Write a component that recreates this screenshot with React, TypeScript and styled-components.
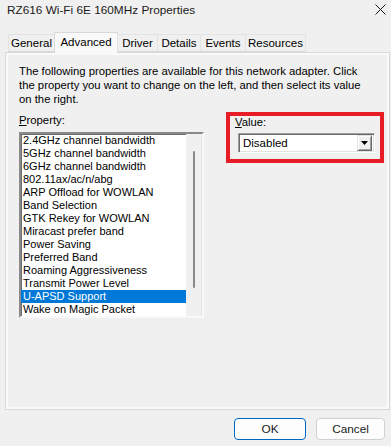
import React from "react";
import styled, { createGlobalStyle } from "styled-components";

const Global = createGlobalStyle`
  html, body { margin: 0; padding: 0; background: #f0f0f0; }
  body { font-family: "Liberation Sans", Arial, sans-serif; color: #000; }
  * { box-sizing: border-box; }
`;

const Window = styled.div`
  width: 391px;
  height: 446px;
  display: flex;
  flex-direction: column;
  background: #f0f0f0;
  overflow: hidden;
`;

const TitleBar = styled.div`
  height: 19px;
  display: flex;
  align-items: center;
  justify-content: space-between;
  padding: 0 5px 0 7px;
  font-size: 11.8px;
  color: #1a1a1a;
`;

const CloseIcon = styled.svg`
  width: 11px;
  height: 11px;
  display: block;
`;

const TabRow = styled.div`
  display: flex;
  align-items: flex-end;
  margin-top: 13px;
  padding-left: 8px;
  height: 20px;
  position: relative;
  z-index: 2;
`;

const Tab = styled.div<{ $w: number; $active?: boolean }>`
  width: ${(p) => p.$w}px;
  height: ${(p) => (p.$active ? 21 : 18)}px;
  margin-bottom: ${(p) => (p.$active ? -1 : 0)}px;
  display: flex;
  align-items: center;
  justify-content: center;
  padding-bottom: ${(p) => (p.$active ? 2 : 0)}px;
  font-size: 11.5px;
  background: ${(p) => (p.$active ? "#f9f9f9" : "#f0f0f0")};
  border: 1px solid ${(p) => (p.$active ? "#d9d9d9" : "#e3e3e3")};
  border-bottom: ${(p) => (p.$active ? "none" : "1px solid #d9d9d9")};
  margin-right: -1px;
`;

const Panel = styled.div`
  margin-left: 5px;
  width: 385px;
  height: 358px;
  border: 1px solid #d9d9d9;
  box-shadow: inset 0 0 0 2px #f9f9f9;
  padding: 11px 5px 0 13px;
  display: flex;
  flex-direction: column;
`;

const Description = styled.p`
  margin: 0;
  font-size: 11.3px;
  line-height: 14px;
  white-space: nowrap;
`;

const Columns = styled.div`
  display: flex;
  align-items: flex-start;
  margin-top: 6px;
`;

const LeftCol = styled.div`
  width: 185px;
  flex-shrink: 0;
  display: flex;
  flex-direction: column;
`;

const Label = styled.div`
  font-size: 11.3px;
  line-height: 13px;
  margin-top: 2px;
  u { text-decoration: underline; text-underline-offset: 1px; }
`;

const ListBox = styled.div`
  margin-top: 5px;
  height: 186px;
  display: flex;
  border-style: solid;
  border-width: 2px;
  border-color: #8a8a8a #f9f9f9 #f9f9f9 #8a8a8a;
  box-shadow: inset 1px 1px 0 #6d6d6d;
  background: #fff;
`;

const Items = styled.div`
  flex: 1;
  display: flex;
  flex-direction: column;
`;

const Item = styled.div<{ $selected?: boolean }>`
  height: 13px;
  line-height: 13px;
  font-size: 11px;
  padding-left: 2px;
  white-space: nowrap;
  background: ${(p) => (p.$selected ? "#0078d7" : "transparent")};
  color: ${(p) => (p.$selected ? "#fff" : "#000")};
`;

const ScrollTrack = styled.div`
  width: 16px;
  flex-shrink: 0;
  background: #f0f0f0;
  display: flex;
  justify-content: center;
  padding-top: 17px;
  border-right: 1px solid #e3e3e3;
`;

const Thumb = styled.div`
  width: 2px;
  height: 137px;
  background: #8a8a8a;
  border-radius: 1px;
`;

const ValueBox = styled.div`
  margin-left: 22px;
  width: 158px;
  flex-shrink: 0;
  height: 51px;
  border: 4px solid #e81c24;
  padding: 0 5px;
  display: flex;
  flex-direction: column;
`;

const ValueLabel = styled(Label)`
  margin-top: 0;
`;

const Combo = styled.div`
  margin: 4px 0 0 3px;
  width: 137px;
  height: 20px;
  background: #fff;
  border-style: solid;
  border-width: 1px;
  border-color: #a0a0a0 #fff #fff #a0a0a0;
  box-shadow: inset 1px 1px 0 #696969, inset -1px -1px 0 #e3e3e3;
  display: flex;
  align-items: center;
  padding: 1px 2px 1px 4px;
  font-size: 11.5px;
`;

const ComboText = styled.span`
  flex: 1;
`;

const ArrowButton = styled.div`
  width: 15px;
  height: 16px;
  background: #f0f0f0;
  border-style: solid;
  border-width: 1px;
  border-color: #e3e3e3 #696969 #696969 #e3e3e3;
  box-shadow: inset 1px 1px 0 #fff, inset -1px -1px 0 #a0a0a0;
  display: flex;
  align-items: center;
  justify-content: center;
`;

const Footer = styled.div`
  flex: 1;
  display: flex;
  justify-content: flex-end;
  align-items: flex-start;
  padding: 8px 6px 0 0;
  gap: 10px;
`;

const Button = styled.button<{ $w: number; $default?: boolean }>`
  width: ${(p) => p.$w}px;
  height: 22px;
  border-radius: 4px;
  border: 1px solid ${(p) => (p.$default ? "#0067c0" : "#d0d0d0")};
  background: #fdfdfd;
  font-family: "Liberation Sans", Arial, sans-serif;
  font-size: 11.8px;
  color: #1a1a1a;
  padding: 0;
`;

const props = [
  "2.4GHz channel bandwidth",
  "5GHz channel bandwidth",
  "6GHz channel bandwidth",
  "802.11ax/ac/n/abg",
  "ARP Offload for WOWLAN",
  "Band Selection",
  "GTK Rekey for WOWLAN",
  "Miracast prefer band",
  "Power Saving",
  "Preferred Band",
  "Roaming Aggressiveness",
  "Transmit Power Level",
  "U-APSD Support",
  "Wake on Magic Packet",
];

const tabs: [string, number][] = [
  ["General", 47],
  ["Advanced", 64],
  ["Driver", 41],
  ["Details", 44],
  ["Events", 46],
  ["Resources", 61],
];

export default function App() {
  return (
    <>
      <Global />
      <Window>
        <TitleBar>
          <span>RZ616 Wi-Fi 6E 160MHz Properties</span>
          <CloseIcon viewBox="0 0 11 11">
            <path d="M0.5 0.5 L10.5 10.5 M10.5 0.5 L0.5 10.5" stroke="#1a1a1a" strokeWidth="1" />
          </CloseIcon>
        </TitleBar>
        <TabRow>
          {tabs.map(([t, w]) => (
            <Tab key={t} $w={w} $active={t === "Advanced"}>
              {t}
            </Tab>
          ))}
        </TabRow>
        <Panel>
          <Description>
            The following properties are available for this network adapter. Click
            <br />
            the property you want to change on the left, and then select its value
            <br />
            on the right.
          </Description>
          <Columns>
            <LeftCol>
              <Label>
                <u>P</u>roperty:
              </Label>
              <ListBox>
                <Items>
                  {props.map((p) => (
                    <Item key={p} $selected={p === "U-APSD Support"}>
                      {p}
                    </Item>
                  ))}
                </Items>
                <ScrollTrack>
                  <Thumb />
                </ScrollTrack>
              </ListBox>
            </LeftCol>
            <ValueBox>
              <ValueLabel>
                <u>V</u>alue:
              </ValueLabel>
              <Combo>
                <ComboText>Disabled</ComboText>
                <ArrowButton>
                  <svg width="7" height="4" viewBox="0 0 7 4">
                    <path d="M0 0 H7 L3.5 4 Z" fill="#000" />
                  </svg>
                </ArrowButton>
              </Combo>
            </ValueBox>
          </Columns>
        </Panel>
        <Footer>
          <Button $w={72} $default>
            OK
          </Button>
          <Button $w={69}>Cancel</Button>
        </Footer>
      </Window>
    </>
  );
}
